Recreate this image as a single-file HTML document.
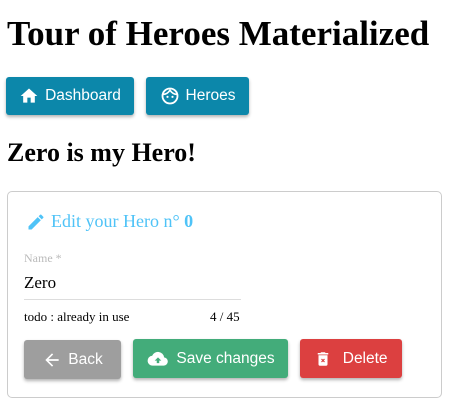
<!DOCTYPE html>
<html><head><style>
body{margin:0;background:#fff;font-family:"Liberation Serif",serif;position:relative;width:450px;height:413px;overflow:hidden}
.a{position:absolute}
h1{position:absolute;left:7px;top:13px;margin:0;font-size:35px;font-weight:bold;line-height:42px;white-space:nowrap}
h2{position:absolute;left:7px;top:140px;margin:0;font-size:26px;font-weight:bold;line-height:26px;white-space:nowrap}
.btn{position:absolute;color:#fff;font-family:"Liberation Sans",sans-serif;font-size:15.5px;border-radius:3px;box-shadow:0 2px 3px rgba(0,0,0,.3);display:flex;align-items:center;justify-content:center;gap:6px}
.card{position:absolute;left:7px;top:191px;width:433px;height:205px;border:1px solid #ccc;border-radius:5px}
</style></head><body>
<h1>Tour of Heroes Materialized</h1>
<div class="btn" style="left:6px;top:77px;width:128px;height:38px;background:#0c87aa">
<svg width="20" height="20" viewBox="0 0 24 24"><path d="M10 20v-6h4v6h5v-8h3L12 3 2 12h3v8z" fill="#fff"/></svg>Dashboard</div>
<div class="btn" style="left:146px;top:77px;width:103px;height:38px;background:#0c87aa">
<svg width="20" height="20" viewBox="0 0 24 24"><circle cx="12" cy="12" r="9" fill="none" stroke="#fff" stroke-width="2.2"/><path d="M4 10c3 0 6-2 8-5 2 3 5 5 8 5" fill="none" stroke="#fff" stroke-width="2"/><circle cx="9" cy="13" r="1.3" fill="#fff"/><circle cx="15" cy="13" r="1.3" fill="#fff"/></svg>Heroes</div>
<h2>Zero is my Hero!</h2>
<div class="card"></div>
<svg class="a" style="left:26px;top:212px" width="20" height="20" viewBox="0 0 24 24"><path d="M3 17.25V21h3.75L17.8 9.94l-3.75-3.75zM20.7 7.04a1 1 0 000-1.41l-2.34-2.34a1 1 0 00-1.41 0l-1.83 1.83 3.75 3.75z" fill="#4fc3f7"/></svg>
<div class="a" style="left:51px;top:211px;font-size:18px;color:#4fc3f7;white-space:nowrap">Edit your Hero n° <b>0</b></div>
<div class="a" style="left:24px;top:251px;font-size:12px;color:#bbb">Name *</div>
<div class="a" style="left:24px;top:273px;font-size:17px">Zero</div>
<div class="a" style="left:24px;top:299px;width:217px;height:1px;background:#ddd"></div>
<div class="a" style="left:24px;top:309px;font-size:13px;white-space:nowrap">todo : already in use</div>
<div class="a" style="left:210px;top:309px;font-size:13px">4 / 45</div>
<div class="btn" style="left:24px;top:340px;width:97px;height:39px;background:#9e9e9e">
<svg width="20" height="20" viewBox="0 0 24 24"><path d="M20 11H7.8l5.6-5.6L12 4l-8 8 8 8 1.4-1.4L7.8 13H20z" fill="#fff"/></svg>Back</div>
<div class="btn" style="left:133px;top:339px;width:155px;height:39px;background:#43ac7a">
<svg width="24" height="20" viewBox="0 0 24 24"><path d="M19.35 10.04A7.5 7.5 0 005 8.04 6 6 0 006 20h13a5 5 0 00.35-9.96z" fill="#fff"/><path d="M12 10l-4 4h2.5v3h3v-3H16z" fill="#43ac7a"/></svg>Save changes</div>
<div class="btn" style="left:300px;top:339px;width:102px;height:39px;background:#dc4040">
<svg width="18" height="20" viewBox="0 0 24 24"><path d="M6 19a2 2 0 002 2h8a2 2 0 002-2V7H6zM19 4h-3.5l-1-1h-5l-1 1H5v2h14z" fill="#fff"/><path d="M10 12l4 4M14 12l-4 4" stroke="#dc4040" stroke-width="1.6"/></svg>&nbsp;Delete</div>
</body></html>
